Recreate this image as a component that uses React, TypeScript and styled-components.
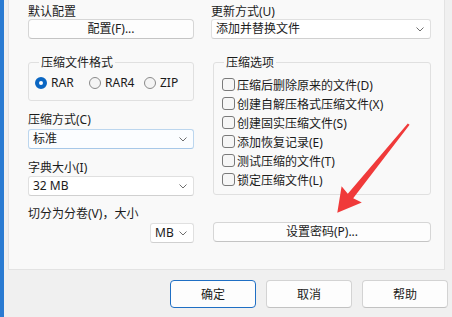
import React, { FC } from 'react';
import styled, { createGlobalStyle } from 'styled-components';

const GlobalStyle = createGlobalStyle`
  html, body {
    margin: 0;
    padding: 0;
    background: #f0f0f0;
  }
  body {
    font-family: "Noto Sans", "Noto Sans CJK SC", sans-serif;
    font-size: 12px;
    color: #1b1b1b;
  }
`;

const Window = styled.div`
    position: relative;
    width: 452px;
    height: 317px;
    box-sizing: border-box;
    border-left: 4px solid #2a7bd2;
    padding-left: 4px;
    background: #f0f0f0;
    overflow: hidden;
`;

const Panel = styled.div`
    box-sizing: border-box;
    width: 437px;
    height: 270px;
    background: #f9f9f9;
    border: 1px solid #e3e3e3;
    border-top: none;
    padding: 0 13px 0 19px;
    display: flex;
    gap: 17px;
`;

const Column = styled.div<{ $width: number }>`
    width: ${p => p.$width}px;
    display: flex;
    flex-direction: column;
`;

const Label = styled.div<{ $top?: number }>`
    margin-top: ${p => p.$top ?? 0}px;
    line-height: 15px;
    white-space: nowrap;
`;

const PushButton = styled.button<{ $top?: number; $indent?: number }>`
    box-sizing: border-box;
    margin: ${p => p.$top ?? 0}px 0 0 ${p => p.$indent ?? 0}px;
    height: 20px;
    padding: 0;
    background: #fdfdfd;
    border: 1px solid #d6d6d6;
    border-bottom-color: #c4c4c4;
    border-radius: 4px;
    font: inherit;
    color: #1b1b1b;
    line-height: 18px;
    text-align: center;
`;

const Combo = styled.div<{ $top?: number; $width?: number; $focused?: boolean }>`
    box-sizing: border-box;
    margin-top: ${p => p.$top ?? 0}px;
    align-self: ${p => (p.$width ? 'flex-end' : 'stretch')};
    width: ${p => (p.$width ? `${p.$width}px` : 'auto')};
    height: 20px;
    display: flex;
    align-items: center;
    justify-content: space-between;
    padding: 0 6px 0 4px;
    background: ${p => (p.$focused ? '#fbfdff' : '#ffffff')};
    border: 1px solid ${p => (p.$focused ? '#bcd6ee' : '#e0e0e0')};
    border-bottom-color: ${p => (p.$focused ? '#a7c8e8' : '#d0d0d0')};
    border-radius: 3px;
    line-height: 18px;
    white-space: nowrap;
`;

const Group = styled.fieldset<{ $top?: number; $indent?: number; $bottom: number }>`
    box-sizing: border-box;
    margin: ${p => p.$top ?? 0}px 0 0 ${p => p.$indent ?? 0}px;
    padding: 5px 0 ${p => p.$bottom}px 6px;
    min-inline-size: 0;
    border: 1px solid #e0e0e0;
    border-radius: 3px;
    legend {
        margin-left: 4px;
        padding: 0 2px;
        line-height: 15px;
    }
`;

const RadioRow = styled.div`
    display: grid;
    grid-template-columns: 54px 55px auto;
    height: 16px;
    align-items: center;
`;

const RadioOption = styled.label`
    display: flex;
    align-items: center;
    gap: 4px;
    line-height: 16px;
`;

const RadioDot = styled.span<{ $checked?: boolean }>`
    box-sizing: border-box;
    width: 12px;
    height: 12px;
    border-radius: 50%;
    background: ${p => (p.$checked ? '#ffffff' : '#f4f4f4')};
    border: ${p => (p.$checked ? '4px solid #0a66c2' : '1px solid #8a8a8a')};
`;

const CheckRow = styled.label`
    display: flex;
    align-items: center;
    gap: 2px;
    height: 19px;
    padding-left: 2px;
    white-space: nowrap;
`;

const CheckBox = styled.span`
    box-sizing: border-box;
    width: 13px;
    height: 13px;
    border: 1px solid #7a7a7a;
    border-radius: 3px;
    background: #f6f6f6;
`;

const Footer = styled.div`
    display: flex;
    justify-content: flex-end;
    gap: 10px;
    padding: 10px 4px 0 0;
`;

const DialogButton = styled.button<{ $default?: boolean }>`
    box-sizing: border-box;
    width: 86px;
    height: 28px;
    padding: 0;
    background: #fdfdfd;
    border: 1px solid ${p => (p.$default ? '#1f6fc4' : '#d3d3d3')};
    border-bottom-color: ${p => (p.$default ? '#1f6fc4' : '#c2c2c2')};
    border-radius: 4px;
    font: inherit;
    color: #1b1b1b;
`;

const ArrowLayer = styled.svg`
    position: absolute;
    left: -4px;
    top: 0;
    pointer-events: none;
`;

const Chevron: FC = () => (
    <svg width="8" height="5" viewBox="0 0 8 5">
        <polyline points="0.5,0.5 4,4 7.5,0.5" fill="none" stroke="#6e6e6e" strokeWidth="1" />
    </svg>
);

const formats = [
    { name: 'RAR', checked: true },
    { name: 'RAR4', checked: false },
    { name: 'ZIP', checked: false },
];

const options = [
    '压缩后删除原来的文件(D)',
    '创建自解压格式压缩文件(X)',
    '创建固实压缩文件(S)',
    '添加恢复记录(E)',
    '测试压缩的文件(T)',
    '锁定压缩文件(L)',
];

const App: FC = () => {
    return (
        <>
            <GlobalStyle />
            <Window>
                <Panel>
                    <Column $width={166}>
                        <Label $top={4}>默认配置</Label>
                        <PushButton>配置(F)...</PushButton>
                        <Group $top={16} $bottom={9}>
                            <legend>压缩文件格式</legend>
                            <RadioRow>
                                {formats.map(f => (
                                    <RadioOption key={f.name}>
                                        <RadioDot $checked={f.checked} />
                                        {f.name}
                                    </RadioOption>
                                ))}
                            </RadioRow>
                        </Group>
                        <Label $top={11}>压缩方式(C)</Label>
                        <Combo $top={2} $focused>
                            标准
                            <Chevron />
                        </Combo>
                        <Label $top={11}>字典大小(I)</Label>
                        <Combo $top={1}>
                            32 MB
                            <Chevron />
                        </Combo>
                        <Label $top={10}>切分为分卷(V)，大小</Label>
                        <Combo $top={2} $width={44}>
                            MB
                            <Chevron />
                        </Combo>
                    </Column>
                    <Column $width={220}>
                        <Label $top={4}>更新方式(U)</Label>
                        <Combo>
                            添加并替换文件
                            <Chevron />
                        </Combo>
                        <Group $top={16} $indent={2} $bottom={5}>
                            <legend>压缩选项</legend>
                            {options.map(o => (
                                <CheckRow key={o}>
                                    <CheckBox />
                                    {o}
                                </CheckRow>
                            ))}
                        </Group>
                        <PushButton $top={27} $indent={2}>设置密码(P)...</PushButton>
                    </Column>
                </Panel>
                <Footer>
                    <DialogButton $default>确定</DialogButton>
                    <DialogButton>取消</DialogButton>
                    <DialogButton>帮助</DialogButton>
                </Footer>
                <ArrowLayer width="452" height="317" viewBox="0 0 452 317">
                    <polygon
                        points="407.8,123.6 409.6,124.8 353.2,198.2 361.8,202.5 337.3,212.8 341.6,186.3 347.8,193.8"
                        fill="#f03a3a"
                    />
                </ArrowLayer>
            </Window>
        </>
    );
};

export default App;
